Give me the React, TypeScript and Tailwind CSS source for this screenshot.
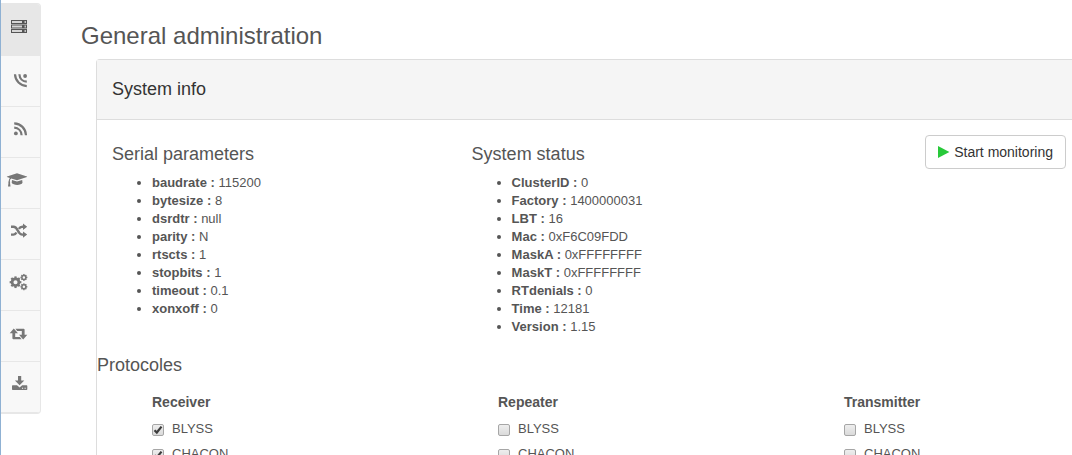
import type { ReactNode } from "react";

function Glyph({ children }: { children: ReactNode }) {
  return (
    <svg viewBox="0 0 22 16" className="block h-4 w-[22px] overflow-visible" fill="currentColor" aria-hidden="true">
      {children}
    </svg>
  );
}

function Gear({ x, y, r, width, tooth }: { x: number; y: number; r: number; width: number; tooth: number }) {
  return (
    <g transform={`translate(${x} ${y})`}>
      <circle r={r} fill="none" stroke="currentColor" strokeWidth={width} />
      {[0, 45, 90, 135, 180, 225, 270, 315].map((angle) => (
        <rect
          key={angle}
          x={-tooth / 2}
          y={-r - width / 2 - tooth / 2}
          width={tooth}
          height={tooth}
          transform={`rotate(${angle})`}
        />
      ))}
    </g>
  );
}

const waves = (
  <>
    <circle cx="9.9" cy="12.4" r="1.9" />
    <g fill="none" stroke="currentColor" strokeWidth="2.2">
      <path d="M8.2 6.7C12.4 6.9 15.4 9.9 15.6 14.2" />
      <path d="M8.2 2.3C14.8 2.6 19.7 7.5 20 14.2" />
    </g>
  </>
);

const navItems: { label: string; icon: ReactNode }[] = [
  {
    label: "Administration",
    icon: (
      <>
        {[2, 6.5, 11].map((y) => (
          <g key={y}>
            <rect x="5" y={y} width="16" height="4" />
            <rect x="6" y={y + 1} width="10" height="2" fill="#d6d6d6" />
            <rect x="18.5" y={y + 1} width="1.5" height="2" fill="#c4c4c4" />
          </g>
        ))}
      </>
    ),
  },
  { label: "Transmitters", icon: <g transform="rotate(180 14.5 9.2)">{waves}</g> },
  { label: "Receivers", icon: waves },
  {
    label: "Learning",
    icon: (
      <>
        <path d="M11 1.3 21 4.4Q21.3 4.7 21 5L11 8.2 5.3 6.4Q3.9 7 3.8 9.3 4.6 9.9 4 10.8L4.5 14.6H2L2.5 10.8Q1.9 9.9 2.7 9.3 2.8 7.2 3.8 5.9L1 5Q.7 4.7 1 4.4Z" />
        <path d="M6 8 11 9.5 16.2 8 16.5 10.8C15.5 13.6 7 13.6 5.7 10.8Z" />
      </>
    ),
  },
  {
    label: "Scenarios",
    icon: (
      <>
        <path
          d="M5 3.8H7.5C12.5 3.8 11 11.6 16.5 11.6H18M5 11.6H7.5C9 11.6 9.8 10.9 10.4 9.6M12.9 5.9C13.7 4.5 14.7 3.8 16.5 3.8H18"
          fill="none"
          stroke="currentColor"
          strokeWidth="2.4"
        />
        <path d="M17 0.6 21.2 3.8 17 7ZM17 8.4 21.2 11.6 17 14.8Z" />
      </>
    ),
  },
  {
    label: "Settings",
    icon: (
      <>
        <Gear x={9.5} y={8.2} r={3.4} width={2.7} tooth={2.2} />
        <Gear x={17.9} y={3.4} r={2} width={1.5} tooth={1.4} />
        <Gear x={17.9} y={12.8} r={2} width={1.5} tooth={1.4} />
      </>
    ),
  },
  {
    label: "Repeaters",
    icon: (
      <>
        <path d="M7.8 3.6 12 8.3H9.2V11.9H13.8L15.6 14.2H7.4Q6.4 14.2 6.4 13.2V8.3H3.7Z" />
        <path d="M17.2 14.4 13 9.7H15.8V6.1H11.2L9.4 3.8H17.6Q18.6 3.8 18.6 4.8V9.7H21.3Z" />
      </>
    ),
  },
  {
    label: "Updates",
    icon: (
      <>
        <path d="M12 0H15.2V4.6H18.3L13.6 9.2 8.9 4.6H12Z" />
        <path
          fillRule="evenodd"
          d="M6 10Q6 9.3 6.7 9.3H11L13.6 11.4 16.2 9.3H20.6Q21.3 9.3 21.3 10V13.3Q21.3 14 20.6 14H6.7Q6 14 6 13.3ZM16 11.7V12.8H17.1V11.7ZM18.6 11.7V12.8H19.7V11.7Z"
        />
      </>
    ),
  },
];

const serial = [
  ["baudrate", "115200"],
  ["bytesize", "8"],
  ["dsrdtr", "null"],
  ["parity", "N"],
  ["rtscts", "1"],
  ["stopbits", "1"],
  ["timeout", "0.1"],
  ["xonxoff", "0"],
];

const status = [
  ["ClusterID", "0"],
  ["Factory", "1400000031"],
  ["LBT", "16"],
  ["Mac", "0xF6C09FDD"],
  ["MaskA", "0xFFFFFFFF"],
  ["MaskT", "0xFFFFFFFF"],
  ["RTdenials", "0"],
  ["Time", "12181"],
  ["Version", "1.15"],
];

function InfoList({ title, rows }: { title: string; rows: string[][] }) {
  return (
    <section className="pt-[9px]">
      <h3 className="mb-2.5 text-lg leading-5">{title}</h3>
      <ul className="list-disc pl-10 text-[13px] leading-[18px]">
        {rows.map(([name, value]) => (
          <li key={name}>
            <strong>{name} :</strong> {value}
          </li>
        ))}
      </ul>
    </section>
  );
}

function ProtocolColumn({ title, checked }: { title: string; checked: boolean }) {
  return (
    <fieldset>
      <legend className="text-sm leading-5 font-bold">{title}</legend>
      <div className="pt-1">
        {["BLYSS", "CHACON"].map((name) => (
          <label key={name} className="flex h-[25px] items-start gap-2 text-[13px]">
            <span className="relative mt-2 block size-3">
              <input
                type="checkbox"
                defaultChecked={checked}
                className="peer block size-3 appearance-none rounded-xs border border-[#a6a6a6] bg-linear-to-b from-[#eeeeee] to-[#dadada]"
              />
              <svg
                viewBox="0 0 12 12"
                className="pointer-events-none invisible absolute inset-0 size-3 peer-checked:visible"
                fill="none"
                stroke="#3c3c3c"
                strokeWidth="2.2"
                aria-hidden="true"
              >
                <path d="M2.5 6.2 4.8 8.5 9.5 2.6" />
              </svg>
            </span>
            <span className="leading-[26px]">{name}</span>
          </label>
        ))}
      </div>
    </fieldset>
  );
}

export default function App() {
  return (
    <div className="flex h-screen items-start overflow-hidden border-l border-[#8fb1d3] bg-white font-['Liberation_Sans',Arial,sans-serif] text-[#555555]">
      <nav
        aria-label="Main"
        className="mt-[3px] w-10 shrink-0 overflow-hidden rounded-r border-t border-r border-b border-[#e7e7e7] bg-[#f8f8f8]"
      >
        {navItems.map((item, i) => (
          <a
            key={item.label}
            href="#"
            aria-label={item.label}
            className={`flex justify-end border-b border-[#e7e7e7] pt-3.5 pr-3 ${
              i === 0 ? "h-[52px] bg-[#e7e7e7] text-[#555555]" : "h-[51px] text-[#777777]"
            }`}
          >
            <Glyph>{item.icon}</Glyph>
          </a>
        ))}
      </nav>
      <main className="min-w-0 flex-1 pt-5 pl-10">
        <h1 className="text-2xl leading-8">General administration</h1>
        <section className="mt-[7px] ml-[15px] rounded-tl border-t border-l border-[#dddddd]">
          <header className="border-b border-[#dddddd] bg-[#f5f5f5] px-[15px] pt-[19px] pb-5 text-[#333333]">
            <h2 className="text-lg leading-5">System info</h2>
          </header>
          <div className="grid grid-cols-[360fr_360fr_235fr] pt-[15px] pr-1.5 pl-[15px]">
            <InfoList title="Serial parameters" rows={serial} />
            <InfoList title="System status" rows={status} />
            <div className="flex items-start justify-end">
              <button
                type="button"
                className="flex items-center gap-1 rounded border border-[#cccccc] bg-white px-3 py-1.5 text-sm leading-5 whitespace-nowrap text-[#333333]"
              >
                <svg viewBox="0 0 12 12" className="size-3" fill="#28c93a" aria-hidden="true">
                  <path d="M0 0 11.4 6 0 12Z" />
                </svg>
                Start monitoring
              </button>
            </div>
          </div>
          <h3 className="mt-[19px] text-lg leading-5">Protocoles</h3>
          <div className="mt-[17px] grid grid-cols-[346fr_346fr_228fr] pl-[55px]">
            <ProtocolColumn title="Receiver" checked />
            <ProtocolColumn title="Repeater" checked={false} />
            <ProtocolColumn title="Transmitter" checked={false} />
          </div>
        </section>
      </main>
    </div>
  );
}
